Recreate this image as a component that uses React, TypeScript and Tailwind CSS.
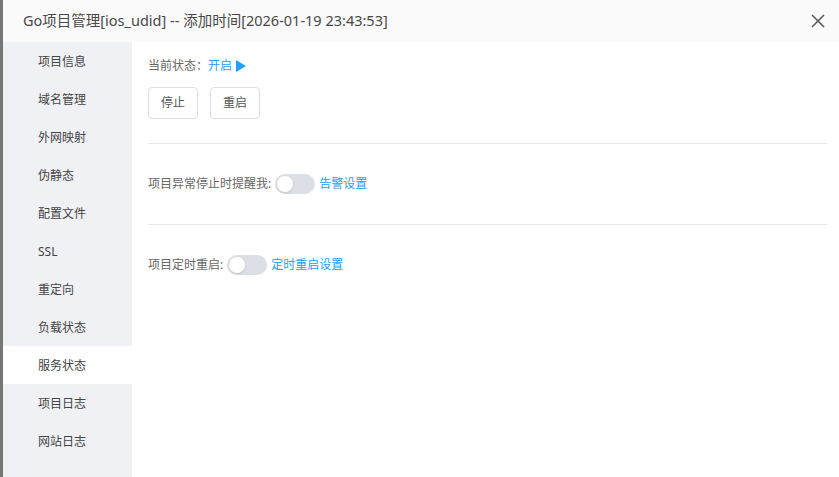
import React from "react";

const font = { fontFamily: '"Noto Sans", "Noto Sans CJK SC", sans-serif' };

const items = ["项目信息", "域名管理", "外网映射", "伪静态", "配置文件", "SSL", "重定向", "负载状态", "服务状态", "项目日志", "网站日志"];

function Toggle() {
  return (
    <span className="inline-flex w-[40px] h-[20px] rounded-full bg-[#dcdfe6] items-center px-[2px] mx-[4px]">
      <span className="w-[16px] h-[16px] rounded-full bg-white shadow-sm" />
    </span>
  );
}

export default function App() {
  return (
    <div className="w-[839px] h-[477px] flex bg-white overflow-hidden text-[12px]" style={font}>
      <div className="w-[3px] bg-[#767676] shrink-0" />
      <div className="flex-1 flex flex-col min-w-0">
        <div className="h-[42px] bg-[#fafafa] flex items-center justify-between pl-[20px] pr-[14px] shrink-0">
          <span className="text-[14.5px] text-[#484848]">Go项目管理[ios_udid] -- 添加时间[2026-01-19 23:43:53]</span>
          <svg width="14" height="14" viewBox="0 0 14 14" className="text-[#555]">
            <path d="M1 1 L13 13 M13 1 L1 13" stroke="currentColor" strokeWidth="1.5" />
          </svg>
        </div>
        <div className="flex flex-1 min-h-0">
          <div className="w-[129px] bg-[#f0f1f5] shrink-0 flex flex-col">
            {items.map((t) => (
              <div
                key={t}
                className={`h-[38px] flex items-center pl-[35px] pt-[1px] text-[#444] ${t === "服务状态" ? "bg-white" : ""}`}
              >
                {t}
              </div>
            ))}
          </div>
          <div className="flex-1 pl-[16px] pr-[12px] text-[#666]">
            <div className="h-[45px] flex items-center pt-[3px]">
              <span>当前状态：</span>
              <span className="text-[#20a0ff] flex items-center gap-[4px]">
                开启
                <svg width="10" height="12" viewBox="0 0 10 12"><path d="M0 0 L10 6 L0 12 Z" fill="#20a0ff" /></svg>
              </span>
            </div>
            <div className="flex gap-[12px]">
              <button className="w-[50px] h-[32px] border border-[#dcdfe6] rounded-[4px] text-[#555] bg-white">停止</button>
              <button className="w-[50px] h-[32px] border border-[#dcdfe6] rounded-[4px] text-[#555] bg-white">重启</button>
            </div>
            <div className="h-px bg-[#e4e6eb] mt-[24px]" />
            <div className="h-[80px] flex items-center">
              <span>项目异常停止时提醒我:</span>
              <Toggle />
              <span className="text-[#20a0ff]">告警设置</span>
            </div>
            <div className="h-px bg-[#e4e6eb]" />
            <div className="h-[80px] flex items-center">
              <span>项目定时重启:</span>
              <Toggle />
              <span className="text-[#20a0ff]">定时重启设置</span>
            </div>
          </div>
        </div>
      </div>
    </div>
  );
}
